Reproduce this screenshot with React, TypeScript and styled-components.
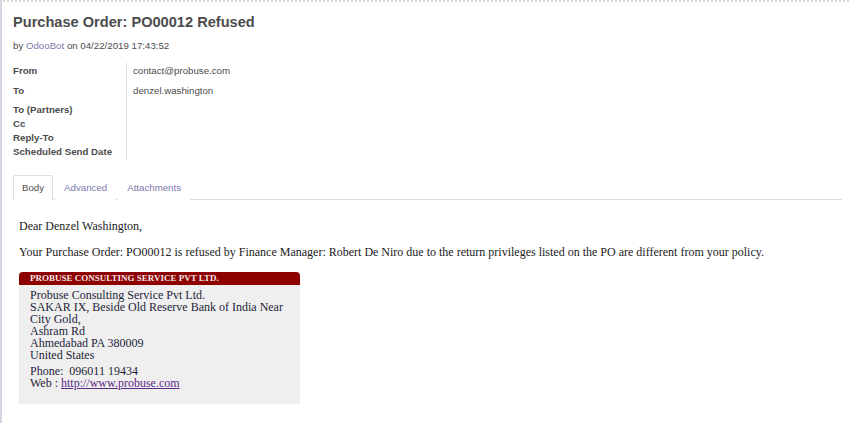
import React from "react";
import styled, { createGlobalStyle } from "styled-components";

const Global = createGlobalStyle`
  html, body { margin: 0; padding: 0; background: #fff; }
  body { font-family: "Liberation Sans", Arial, sans-serif; }
`;

const Sheet = styled.div`
  box-sizing: border-box;
  width: 849px;
  height: 423px;
  border-top: 2px dotted #d6d6d6;
  border-left: 2px solid #d4d4de;
  padding: 10px 7px 0 11px;
  color: #4c4c4c;
`;

const Title = styled.h1`
  margin: 0;
  font-size: 14.6px;
  font-weight: bold;
  line-height: 20px;
  color: #4c4c4c;
`;

const Meta = styled.div`
  margin-top: 8px;
  font-size: 9.7px;
  line-height: 12px;
`;

const Author = styled.span`
  color: #7c7bad;
`;

const Fields = styled.div`
  margin-top: 11px;
  display: grid;
  grid-template-columns: 114px 1fr;
`;

const Labels = styled.div`
  display: flex;
  flex-direction: column;
  border-right: 1px solid #dcdcdc;
  padding: 2px 0 0;
`;

const Label = styled.div<{ $h: number }>`
  font-size: 9.7px;
  font-weight: bold;
  line-height: 12px;
  height: ${(p) => p.$h}px;
`;

const Values = styled.div`
  display: flex;
  flex-direction: column;
  padding: 2px 0 0 6px;
`;

const Value = styled.div<{ $h: number }>`
  font-size: 9.7px;
  line-height: 12px;
  height: ${(p) => p.$h}px;
`;

const Tabs = styled.div`
  margin-top: 15px;
  display: flex;
  border-bottom: 1px solid #dcdce4;
  height: 24px;
`;

const Tab = styled.div<{ $active?: boolean }>`
  box-sizing: border-box;
  height: 25px;
  padding: 0 8px;
  font-size: 9.7px;
  line-height: 23px;
  color: ${(p) => (p.$active ? "#4c4c4c" : "#7c7bad")};
  border: 1px solid ${(p) => (p.$active ? "#dedede" : "transparent")};
  border-bottom-color: ${(p) => (p.$active ? "#fff" : "transparent")};
  border-radius: 2px 2px 0 0;
  background: #fff;
  margin-right: 2px;
`;

const Body = styled.div`
  padding: 19px 0 0 6px;
  font-family: "Liberation Serif", "Times New Roman", serif;
  font-size: 12px;
  line-height: 15px;
  color: #222;
`;

const Para = styled.p`
  margin: 0 0 11px;
`;

const Card = styled.div`
  margin-top: 12px;
  width: 281px;
  background: #efefef;
  padding-bottom: 15px;
`;

const CardHead = styled.div`
  background: #8e0000;
  color: #f2e6e6;
  font-weight: bold;
  font-size: 9px;
  line-height: 13px;
  height: 13px;
  padding-left: 11px;
  border-radius: 4px 4px 0 0;
  text-transform: uppercase;
`;

const CardBody = styled.div`
  padding: 4px 0 0 11px;
  font-size: 12px;
  line-height: 12px;
  color: #1e1e3a;
`;

const Gap = styled.div`
  height: 4px;
`;

const Link = styled.a`
  color: #5b2a86;
  text-decoration: underline;
`;

export default function App() {
  return (
    <>
      <Global />
      <Sheet>
        <Title>Purchase Order: PO00012 Refused</Title>
        <Meta>
          by <Author>OdooBot</Author> on 04/22/2019 17:43:52
        </Meta>
        <Fields>
          <Labels>
            <Label $h={20}>From</Label>
            <Label $h={19}>To</Label>
            <Label $h={14}>To (Partners)</Label>
            <Label $h={14}>Cc</Label>
            <Label $h={14}>Reply-To</Label>
            <Label $h={14}>Scheduled Send Date</Label>
          </Labels>
          <Values>
            <Value $h={20}>contact@probuse.com</Value>
            <Value $h={19}>denzel.washington</Value>
          </Values>
        </Fields>
        <Tabs>
          <Tab $active>Body</Tab>
          <Tab>Advanced</Tab>
          <Tab>Attachments</Tab>
        </Tabs>
        <Body>
          <Para>Dear Denzel Washington,</Para>
          <Para>
            Your Purchase Order: PO00012 is refused by Finance Manager: Robert De Niro due to the
            return privileges listed on the PO are different from your policy.
          </Para>
          <Card>
            <CardHead>Probuse Consulting Service Pvt Ltd.</CardHead>
            <CardBody>
              Probuse Consulting Service Pvt Ltd.
              <br />
              SAKAR IX, Beside Old Reserve Bank of India Near City Gold,
              <br />
              Ashram Rd
              <br />
              Ahmedabad PA 380009
              <br />
              United States
              <Gap />
              Phone:&nbsp; 096011 19434
              <br />
              Web : <Link href="#">http://www.probuse.com</Link>
            </CardBody>
          </Card>
        </Body>
      </Sheet>
    </>
  );
}
